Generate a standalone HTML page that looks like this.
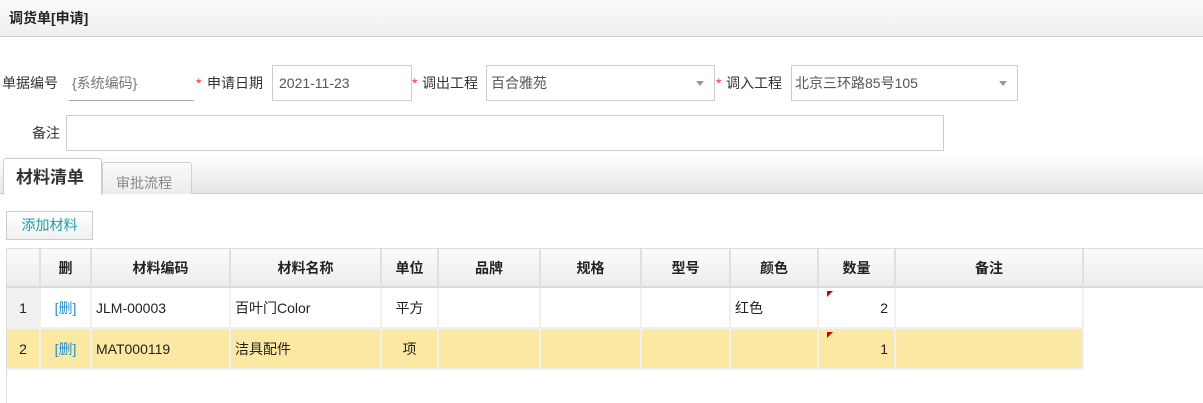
<!DOCTYPE html>
<html><head><meta charset="utf-8"><style>
*{margin:0;padding:0;box-sizing:border-box}
body{width:1203px;height:403px;overflow:hidden;background:#fff;font-family:"Liberation Sans","Noto Sans CJK SC",sans-serif;font-size:14px;color:#333;position:relative}
.a{position:absolute;white-space:nowrap}
.hdr{left:0;top:0;width:1203px;height:37px;background:linear-gradient(#fafafa,#efefef);border-bottom:1px solid #d0d0d0}
.lbl{font-size:14px;color:#333;line-height:20px}
.req{color:#e33;font-size:14px;line-height:20px}
.box{border:1px solid #ccc;background:#fff;height:36px;line-height:34px;padding-left:6px;color:#555;font-size:14px}
.arr{position:absolute;right:10px;top:15px;width:0;height:0;border-left:4px solid transparent;border-right:4px solid transparent;border-top:5px solid #999}
.th{top:249px;height:39px;line-height:39px;text-align:center;font-weight:bold;font-size:14px;color:#222;background:linear-gradient(#fbfbfb,#ededed);border-right:2px solid #e0e0e0;border-bottom:2px solid #d8d8d8}
.td{height:41px;line-height:40px;font-size:14px;color:#222;border-right:2px solid #f0f0f0;border-bottom:2px solid #eef0f4;padding-left:4px}
.y{background:#fbe9a3}
.c{text-align:center;padding-left:0}
.r{text-align:right;padding-right:6px}
.tri{position:absolute;left:8px;top:3px;width:0;height:0;border-top:6px solid #c00;border-right:6px solid transparent}
.del{color:#2a8fd0}
</style></head><body>
<div class="a hdr"></div>
<div class="a" style="left:9px;top:8px;font-weight:bold;font-size:14px;color:#222;line-height:20px">调货单[申请]</div>

<div class="a lbl" style="left:2px;top:73px">单据编号</div>
<div class="a" style="left:69px;top:66px;width:125px;height:35px;border-bottom:1px solid #aaa;line-height:34px;padding-left:3px;color:#777">{系统编码}</div>
<div class="a req" style="left:196px;top:73px">*</div>
<div class="a lbl" style="left:207px;top:73px">申请日期</div>
<div class="a box" style="left:272px;top:65px;width:140px">2021-11-23</div>
<div class="a req" style="left:412px;top:73px">*</div>
<div class="a lbl" style="left:422px;top:73px">调出工程</div>
<div class="a box" style="left:486px;top:65px;width:229px;padding-left:4px">百合雅苑<span class="arr"></span></div>
<div class="a req" style="left:716px;top:73px">*</div>
<div class="a lbl" style="left:726px;top:73px">调入工程</div>
<div class="a box" style="left:791px;top:65px;width:227px;padding-left:3px">北京三环路85号105<span class="arr"></span></div>

<div class="a lbl" style="left:32px;top:123px">备注</div>
<div class="a box" style="left:66px;top:115px;width:878px"></div>

<div class="a" style="left:0;top:157px;width:1203px;height:37px;background:linear-gradient(#fdfdfd,#e6e6e6);border-bottom:1px solid #ccc"></div>
<div class="a" style="left:3px;top:158px;width:99px;height:37px;background:#fff;border:1px solid #ccc;border-bottom:none;border-radius:3px 3px 0 0;font-weight:bold;font-size:17px;line-height:38px;padding-left:12px;color:#333">材料清单</div>
<div class="a" style="left:102px;top:162px;width:90px;height:32px;background:linear-gradient(#fafafa,#ececec);border:1px solid #d0d0d0;border-bottom:none;border-radius:3px 3px 0 0;font-size:14px;line-height:40px;padding-left:13px;color:#888">审批流程</div>

<div class="a" style="left:6px;top:211px;width:87px;height:29px;border:1px solid #ccc;background:linear-gradient(#fff,#f0f0f0);color:#1aa0aa;font-size:14px;line-height:27px;text-align:center">添加材料</div>

<div class="a" style="left:6px;top:248px;width:1197px;height:155px;border-left:1px solid #ddd;border-top:1px solid #ddd"></div>
<div class="a th" style="left:7px;width:34px"></div>
<div class="a th" style="left:41px;width:51px">删</div>
<div class="a th" style="left:92px;width:139px">材料编码</div>
<div class="a th" style="left:231px;width:151px">材料名称</div>
<div class="a th" style="left:382px;width:57px">单位</div>
<div class="a th" style="left:439px;width:102px">品牌</div>
<div class="a th" style="left:541px;width:101px">规格</div>
<div class="a th" style="left:642px;width:89px">型号</div>
<div class="a th" style="left:731px;width:88px">颜色</div>
<div class="a th" style="left:819px;width:77px">数量</div>
<div class="a th" style="left:896px;width:188px">备注</div>
<div class="a th" style="left:1084px;width:119px;border-right:none"></div>

<div class="a td c" style="left:7px;top:288px;width:34px;background:#f0f0f0">1</div>
<div class="a td c del" style="left:41px;top:288px;width:51px">[删]</div>
<div class="a td" style="left:92px;top:288px;width:139px">JLM-00003</div>
<div class="a td" style="left:231px;top:288px;width:151px">百叶门Color</div>
<div class="a td c" style="left:382px;top:288px;width:57px">平方</div>
<div class="a td" style="left:439px;top:288px;width:102px"></div>
<div class="a td" style="left:541px;top:288px;width:101px"></div>
<div class="a td" style="left:642px;top:288px;width:89px"></div>
<div class="a td" style="left:731px;top:288px;width:88px">红色</div>
<div class="a td r" style="left:819px;top:288px;width:77px"><span class="tri"></span>2</div>
<div class="a td" style="left:896px;top:288px;width:188px"></div>

<div class="a td c y" style="left:7px;top:329px;width:34px">2</div>
<div class="a td c y del" style="left:41px;top:329px;width:51px">[删]</div>
<div class="a td y" style="left:92px;top:329px;width:139px">MAT000119</div>
<div class="a td y" style="left:231px;top:329px;width:151px">洁具配件</div>
<div class="a td c y" style="left:382px;top:329px;width:57px">项</div>
<div class="a td y" style="left:439px;top:329px;width:102px"></div>
<div class="a td y" style="left:541px;top:329px;width:101px"></div>
<div class="a td y" style="left:642px;top:329px;width:89px"></div>
<div class="a td y" style="left:731px;top:329px;width:88px"></div>
<div class="a td r y" style="left:819px;top:329px;width:77px"><span class="tri"></span>1</div>
<div class="a td y" style="left:896px;top:329px;width:188px"></div>
</body></html>
